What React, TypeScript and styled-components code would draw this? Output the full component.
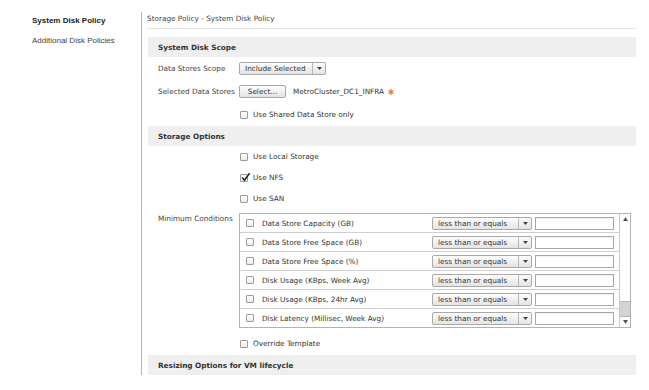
import React from 'react';
import styled, { createGlobalStyle } from 'styled-components';

const Global = createGlobalStyle`
  html, body { margin: 0; padding: 0; background: #fff; }
  body { font-family: "DejaVu Sans", Verdana, sans-serif; }
`;

const Page = styled.div`
  display: flex;
  align-items: flex-start;
  width: 649px;
  height: 390px;
  overflow: hidden;
`;

const Nav = styled.nav`
  width: 141px;
  flex: none;
  box-sizing: border-box;
  padding: 15px 0 0 32px;
  display: flex;
  flex-direction: column;
  gap: 9px;
  font-family: "Liberation Sans", Arial, sans-serif;
  font-size: 8px;
  line-height: 11px;
`;

const NavItem = styled.div<{ $active?: boolean }>`
  font-weight: ${(p) => (p.$active ? 700 : 400)};
  color: ${(p) => (p.$active ? '#222' : '#444')};
  white-space: nowrap;
`;

const Main = styled.main`
  margin-top: 12px;
  width: 495px;
  flex: none;
  box-sizing: border-box;
  border-left: 1px solid #b8b8b8;
  padding-left: 5px;
  font-size: 7.3px;
  color: #333;
`;

const Title = styled.div`
  line-height: 14px;
  padding-bottom: 2px;
  border-bottom: 1px solid #e4e4e4;
  color: #444;
`;

const SectionBar = styled.div<{ $mt?: number }>`
  margin-left: 1px;
  margin-top: ${(p) => p.$mt ?? 0}px;
  height: 20px;
  background: #efefef;
  font-weight: 700;
  padding-left: 10px;
  display: flex;
  align-items: center;
  color: #333;
`;

const FormRow = styled.div<{ $h: number; $mt?: number; $top?: boolean }>`
  display: grid;
  grid-template-columns: 81px auto;
  align-items: ${(p) => (p.$top ? 'start' : 'center')};
  height: ${(p) => p.$h}px;
  margin-top: ${(p) => p.$mt ?? 0}px;
  padding-left: 11px;
`;

const Label = styled.div<{ $pt?: number }>`
  color: #444;
  white-space: nowrap;
  line-height: 9px;
  padding-top: ${(p) => p.$pt ?? 0}px;
`;

const Controls = styled.div`
  display: flex;
  align-items: center;
  gap: 7px;
`;

const CheckLine = styled.label`
  display: flex;
  align-items: center;
  gap: 5px;
  margin-left: 1px;
  color: #333;
  white-space: nowrap;
`;

const Box = styled.span`
  position: relative;
  width: 8px;
  height: 8px;
  box-sizing: border-box;
  border: 1px solid #9c9c9c;
  border-radius: 1px;
  background: linear-gradient(#ffffff, #ececec);
  flex: none;
`;

const Tick = styled.svg`
  position: absolute;
  left: 0px;
  top: -3px;
`;

const Checkbox = ({ checked }: { checked?: boolean }) => (
  <Box>
    {checked && (
      <Tick width="10" height="10" viewBox="0 0 10 10">
        <path d="M1.2 5.6 L3.4 8.2 L8.6 1.2" stroke="#1e1e1e" strokeWidth="1.5" fill="none" />
      </Tick>
    )}
  </Box>
);

const SelectBox = styled.div<{ $w: number }>`
  width: ${(p) => p.$w}px;
  height: 13px;
  box-sizing: border-box;
  border: 1px solid #a8a8a8;
  border-radius: 2px;
  background: linear-gradient(#fdfdfd, #e4e4e4);
  display: flex;
  align-items: stretch;
  color: #333;
  flex: none;
`;

const SelectText = styled.span`
  flex: 1;
  padding-left: 5px;
  display: flex;
  align-items: center;
  white-space: nowrap;
  overflow: hidden;
`;

const SelectArrow = styled.span`
  width: 12px;
  border-left: 1px solid #b8b8b8;
  display: flex;
  align-items: center;
  justify-content: center;
`;

const Caret = () => (
  <svg width="5" height="3" viewBox="0 0 5 3">
    <path d="M0 0 H5 L2.5 3 Z" fill="#444" />
  </svg>
);

const Select = ({ w, value }: { w: number; value: string }) => (
  <SelectBox $w={w}>
    <SelectText>{value}</SelectText>
    <SelectArrow>
      <Caret />
    </SelectArrow>
  </SelectBox>
);

const Button = styled.button`
  width: 47px;
  height: 13px;
  box-sizing: border-box;
  padding: 0;
  border: 1px solid #a8a8a8;
  border-radius: 2px;
  background: linear-gradient(#fdfdfd, #e4e4e4);
  font-family: inherit;
  font-size: 7.3px;
  color: #333;
  display: flex;
  align-items: center;
  justify-content: center;
`;

const Chosen = styled.span`
  display: flex;
  align-items: center;
  gap: 4px;
  color: #333;
  white-space: nowrap;
`;

const Required = () => (
  <svg width="6" height="6" viewBox="0 0 6 6">
    <g stroke="#ef7d32" strokeWidth="1.3" strokeLinecap="round">
      <path d="M3 0.6 V5.4" />
      <path d="M0.9 1.8 L5.1 4.2" />
      <path d="M0.9 4.2 L5.1 1.8" />
    </g>
    <circle cx="3" cy="3" r="1.6" fill="#ef7d32" />
  </svg>
);

const CondTable = styled.div`
  width: 392px;
  height: 115px;
  box-sizing: border-box;
  border: 1px solid #b2b2b2;
  display: flex;
`;

const CondRows = styled.div`
  flex: 1;
  display: flex;
  flex-direction: column;
`;

const CondRow = styled.div`
  height: 18px;
  display: flex;
  align-items: center;
  padding-left: 6px;
  padding-right: 5px;
  & + & {
    border-top: 1px solid #cfcfcf;
  }
`;

const CondName = styled.span`
  flex: 1;
  margin-left: 8px;
  white-space: nowrap;
  color: #333;
`;

const Input = styled.div`
  width: 79px;
  height: 13px;
  box-sizing: border-box;
  margin-left: 3px;
  border: 1px solid #a8a8a8;
  background: #fff;
  box-shadow: inset 0 1px 1px rgba(0, 0, 0, 0.06);
  flex: none;
`;

const ScrollBar = styled.div`
  width: 10px;
  border-left: 1px solid #c8c8c8;
  display: flex;
  flex-direction: column;
  background: #fff;
`;

const ScrollBtn = styled.div`
  height: 10px;
  display: flex;
  align-items: center;
  justify-content: center;
`;

const ScrollTrack = styled.div`
  flex: 1;
`;

const ScrollThumb = styled.div`
  height: 16px;
  box-sizing: border-box;
  border-top: 1px solid #b8b8b8;
  border-bottom: 1px solid #b8b8b8;
  background: #d4d4d4;
`;

const conditions = [
  'Data Store Capacity (GB)',
  'Data Store Free Space (GB)',
  'Data Store Free Space (%)',
  'Disk Usage (KBps, Week Avg)',
  'Disk Usage (KBps, 24hr Avg)',
  'Disk Latency (Millisec, Week Avg)',
];

export default function App() {
  return (
    <>
      <Global />
      <Page>
        <Nav>
          <NavItem $active>System Disk Policy</NavItem>
          <NavItem>Additional Disk Policies</NavItem>
        </Nav>
        <Main>
          <Title>Storage Policy - System Disk Policy</Title>

          <SectionBar $mt={8}>System Disk Scope</SectionBar>
          <FormRow $h={23}>
            <Label>Data Stores Scope</Label>
            <Controls>
              <Select w={87} value="Include Selected" />
            </Controls>
          </FormRow>
          <FormRow $h={23}>
            <Label>Selected Data Stores</Label>
            <Controls>
              <Button>Select...</Button>
              <Chosen>
                MetroCluster_DC1_INFRA <Required />
              </Chosen>
            </Controls>
          </FormRow>
          <FormRow $h={23}>
            <Label />
            <CheckLine>
              <Checkbox />
              Use Shared Data Store only
            </CheckLine>
          </FormRow>

          <SectionBar>Storage Options</SectionBar>
          <FormRow $h={21}>
            <Label />
            <CheckLine>
              <Checkbox />
              Use Local Storage
            </CheckLine>
          </FormRow>
          <FormRow $h={21}>
            <Label />
            <CheckLine>
              <Checkbox checked />
              Use NFS
            </CheckLine>
          </FormRow>
          <FormRow $h={21}>
            <Label />
            <CheckLine>
              <Checkbox />
              Use SAN
            </CheckLine>
          </FormRow>
          <FormRow $h={115} $mt={4} $top>
            <Label $pt={1}>Minimum Conditions</Label>
            <CondTable>
              <CondRows>
                {conditions.map((c) => (
                  <CondRow key={c}>
                    <Checkbox />
                    <CondName>{c}</CondName>
                    <Select w={100} value="less than or equals" />
                    <Input />
                  </CondRow>
                ))}
              </CondRows>
              <ScrollBar>
                <ScrollBtn>
                  <svg width="5" height="4" viewBox="0 0 5 4">
                    <path d="M0 4 H5 L2.5 0 Z" fill="#555" />
                  </svg>
                </ScrollBtn>
                <ScrollTrack />
                <ScrollThumb />
                <ScrollBtn>
                  <svg width="5" height="4" viewBox="0 0 5 4">
                    <path d="M0 0 H5 L2.5 4 Z" fill="#555" />
                  </svg>
                </ScrollBtn>
              </ScrollBar>
            </CondTable>
          </FormRow>
          <FormRow $h={23} $mt={4}>
            <Label />
            <CheckLine>
              <Checkbox />
              Override Template
            </CheckLine>
          </FormRow>
          <SectionBar>Resizing Options for VM lifecycle</SectionBar>
        </Main>
      </Page>
    </>
  );
}
